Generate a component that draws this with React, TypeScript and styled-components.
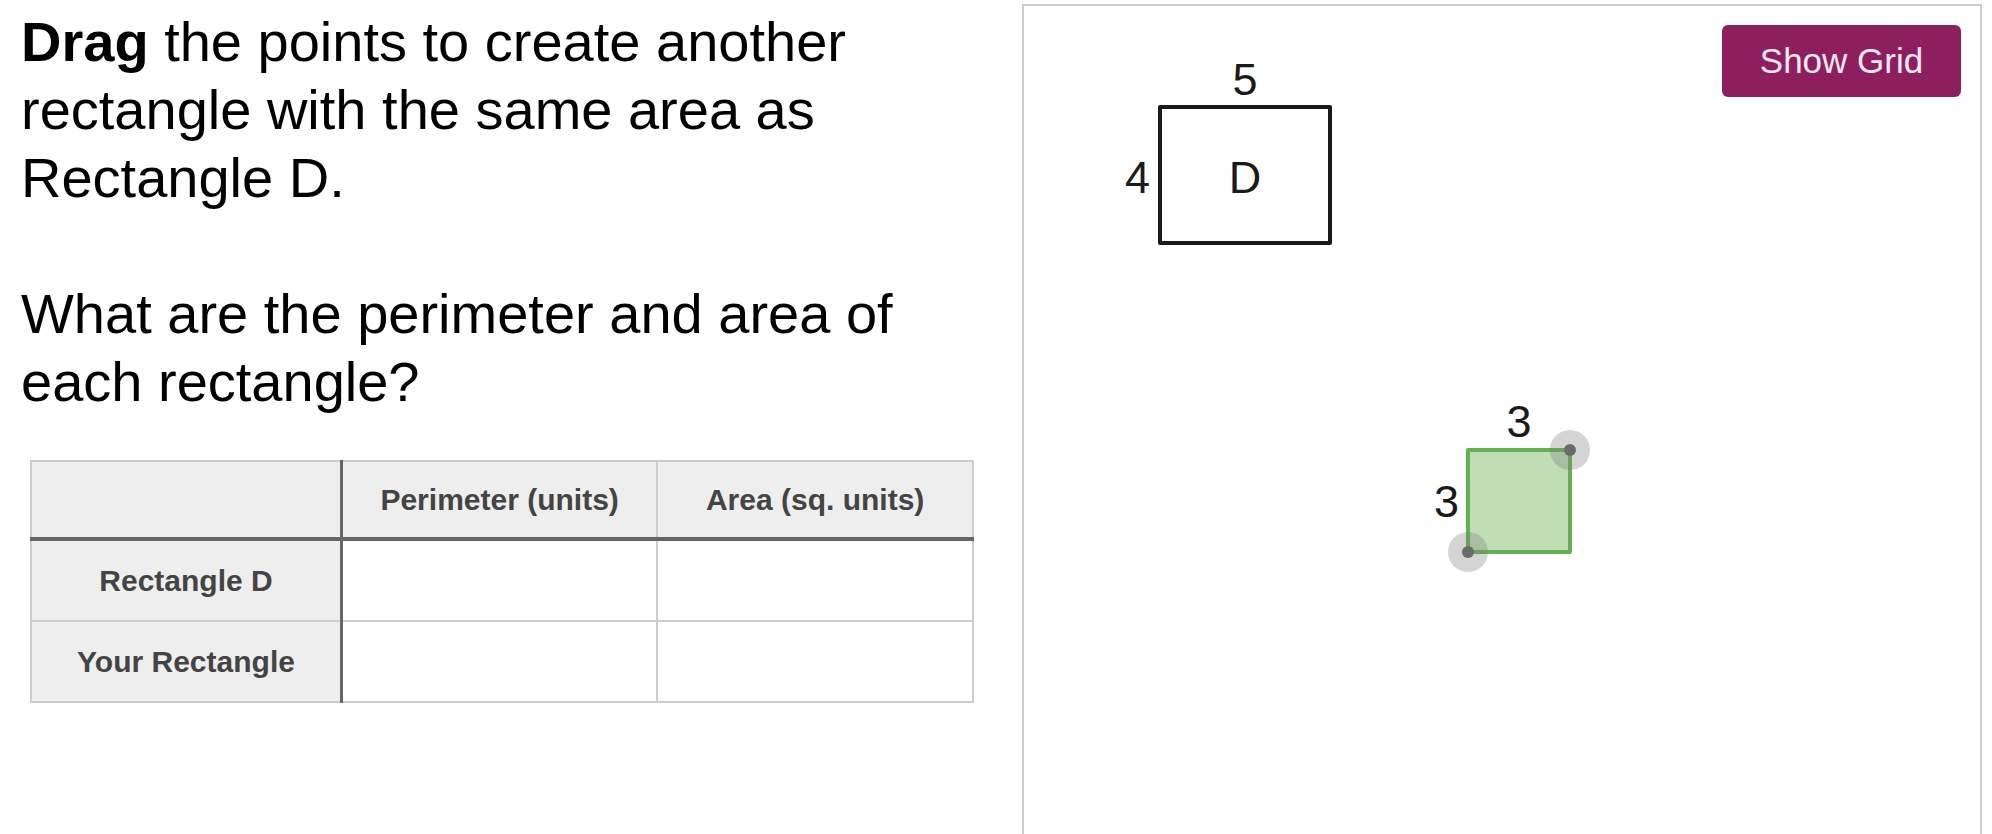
import * as React from 'react';
import styled, {createGlobalStyle} from "styled-components";

const GlobalStyle = createGlobalStyle`
    html, body {
        margin: 0;
        padding: 0;
        background: #fff;
        font-family: "Liberation Sans", Arial, sans-serif;
        overflow: hidden;
    }
`

const rows = ["Rectangle D", "Your Rectangle"];
const columns = ["Perimeter (units)", "Area (sq. units)"];

const UNIT = 34;

export default function App() {
    return (
        <>
            <GlobalStyle/>
            <Page>
                <LeftColumn>
                    <Prompt>
                        <strong>Drag</strong> the points to create another rectangle with the same area as Rectangle D.
                    </Prompt>
                    <Question>What are the perimeter and area of each rectangle?</Question>
                    <Table>
                        <thead>
                        <tr>
                            <HeadCell $first/>
                            {columns.map(c => <HeadCell key={c}>{c}</HeadCell>)}
                        </tr>
                        </thead>
                        <tbody>
                        {rows.map(r => (
                            <tr key={r}>
                                <RowHead>{r}</RowHead>
                                {columns.map(c => <Cell key={c}/>)}
                            </tr>
                        ))}
                        </tbody>
                    </Table>
                </LeftColumn>

                <Canvas>
                    <Drawing width="956" height="840">
                        {/* rectangle D, 5 x 4 */}
                        <rect x={136} y={101} width={UNIT * 5} height={UNIT * 4}
                              fill="none" stroke="#1a1a1a" strokeWidth={4} strokeLinejoin="round"/>
                        <Label x={221} y={89} textAnchor="middle">5</Label>
                        <Label x={126} y={187} textAnchor="end">4</Label>
                        <Label x={221} y={187} textAnchor="middle">D</Label>

                        {/* user rectangle, 3 x 3 */}
                        <rect x={444} y={444} width={UNIT * 3} height={UNIT * 3}
                              fill="#bfdeb6" stroke="#63b14f" strokeWidth={4} strokeLinejoin="round"/>
                        <Label x={495} y={431} textAnchor="middle">3</Label>
                        <Label x={435} y={511} textAnchor="end">3</Label>

                        <Handle cx={546} cy={444}/>
                        <Handle cx={444} cy={546}/>
                    </Drawing>
                    <Toolbar>
                        <GridButton>Show Grid</GridButton>
                    </Toolbar>
                </Canvas>
            </Page>
        </>
    );
}

const Handle = ({cx, cy}: { cx: number, cy: number }) => (
    <g>
        <circle cx={cx} cy={cy} r={20} fill="rgba(120,120,120,0.32)"/>
        <circle cx={cx} cy={cy} r={6} fill="#6a6a6a"/>
    </g>
);

const Page = styled.div`
    display: flex;
    align-items: flex-start;
    gap: 39px;
    padding: 4px 10px 0 21px;
`

const LeftColumn = styled.div`
    width: 962px;
    flex-shrink: 0;
    display: flex;
    flex-direction: column;
`

const Prompt = styled.p`
    margin: 4px 0 68px;
    font-size: 56px;
    line-height: 68px;
    color: #000;

    strong {
        font-weight: 700;
    }
`

const Question = styled(Prompt)`
    margin: 0 0 44px;
`

const Table = styled.table`
    width: 944px;
    margin-left: 9px;
    border-collapse: collapse;
    table-layout: fixed;
    border: 2px solid #cccccc;
    font-size: 30px;
    font-weight: 700;
    color: #444;
`

const HeadCell = styled.th<{ $first?: boolean }>`
    width: ${p => p.$first ? "308px" : "auto"};
    height: 75px;
    background: #eeeeee;
    border-bottom: 4px solid #666;
    border-right: ${p => p.$first ? "3px solid #666" : "2px solid #cccccc"};
    text-align: center;
    vertical-align: middle;
    font-weight: 700;
    padding: 0;
`

const RowHead = styled.th`
    height: 79px;
    background: #eeeeee;
    border-right: 3px solid #666;
    border-bottom: 2px solid #cccccc;
    text-align: center;
    font-weight: 700;
    padding: 0;
`

const Cell = styled.td`
    border-right: 2px solid #cccccc;
    border-bottom: 2px solid #cccccc;
    background: #fff;
`

const Canvas = styled.div`
    position: relative;
    width: 956px;
    height: 840px;
    flex-shrink: 0;
    border: 2px solid #cccccc;
    border-bottom: none;
    display: flex;
    justify-content: flex-end;
    align-items: flex-start;
`

const Drawing = styled.svg`
    position: absolute;
    left: 0;
    top: 0;
`

const Label = styled.text`
    font-family: "Liberation Sans", Arial, sans-serif;
    font-size: 45px;
    fill: #1a1a1a;
`

const Toolbar = styled.div`
    position: relative;
    padding: 19px 19px 0 0;
`

const GridButton = styled.button`
    width: 239px;
    height: 72px;
    border: none;
    border-radius: 6px;
    background: #8e1f5e;
    color: #f7e9f1;
    font-family: "Liberation Sans", Arial, sans-serif;
    font-size: 35px;
    cursor: pointer;
`
